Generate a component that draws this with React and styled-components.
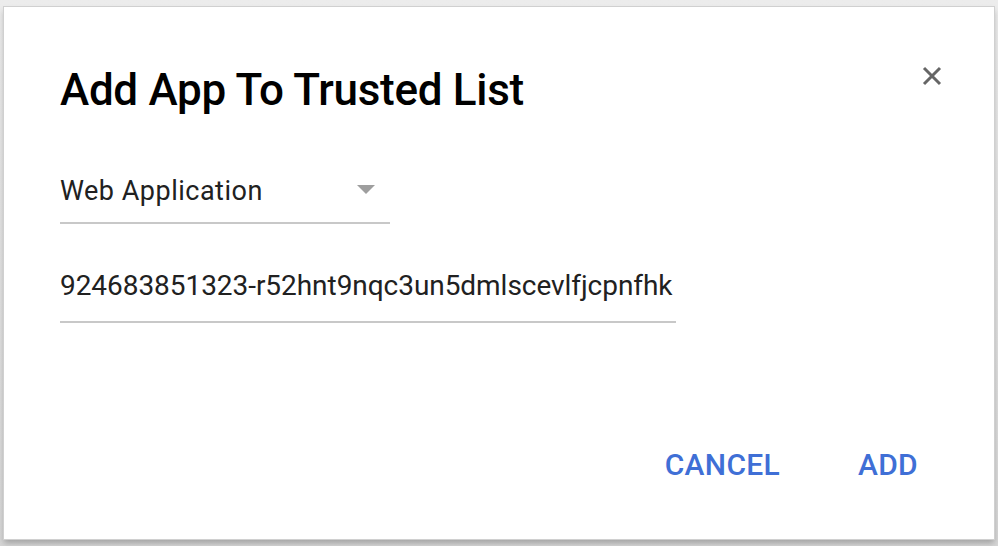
import React, { useState } from 'react';
import styled, { createGlobalStyle } from 'styled-components';

const GlobalStyle = createGlobalStyle`
  html, body {
    margin: 0;
    padding: 0;
    background: #e4e4e4;
    font-family: Roboto, "Liberation Sans", sans-serif;
  }
`;

const Backdrop = styled.div`
  width: 998px;
  height: 546px;
  padding: 7px 4px 0 4px;
  box-sizing: border-box;
  background: linear-gradient(#ececec, #d6d6d6);
`;

const Dialog = styled.div`
  width: 990px;
  height: 532px;
  box-sizing: border-box;
  background: #fff;
  box-shadow: 0 0 0 1px #d0d0d0, 0 4px 6px rgba(0, 0, 0, 0.25);
  padding: 57px 0 0 56px;
  display: flex;
  flex-direction: column;
`;

const Header = styled.div`
  display: flex;
  justify-content: space-between;
  align-items: flex-start;
  padding-right: 50px;
`;

const Title = styled.h2`
  margin: 0;
  font-size: 44px;
  font-weight: 500;
  line-height: 1.2;
  letter-spacing: -0.3px;
  color: #000;
`;

const CloseButton = styled.button`
  border: 0;
  background: none;
  padding: 0;
  width: 24px;
  height: 24px;
  cursor: pointer;
  display: flex;
  align-items: center;
  justify-content: center;
`;

const Field = styled.div`
  width: ${p => p.width}px;
  margin-top: ${p => p.top}px;
  border-bottom: 2px solid #c8c8c8;
  display: flex;
  align-items: center;
  justify-content: space-between;
  padding-bottom: ${p => p.bottom}px;
`;

const FieldText = styled.span`
  font-size: ${p => p.size}px;
  line-height: ${p => p.lh}px;
  letter-spacing: ${p => p.spacing || 0}px;
  color: #212121;
`;

const Caret = styled.span`
  width: 0;
  height: 0;
  border-left: 9px solid transparent;
  border-right: 9px solid transparent;
  border-top: 9px solid #9e9e9e;
  margin-right: 15px;
  margin-top: -3px;
`;

const Actions = styled.div`
  margin-top: auto;
  margin-bottom: 56px;
  display: flex;
  justify-content: flex-end;
  gap: 78px;
  padding-right: 76px;
`;

const TextButton = styled.button`
  border: 0;
  background: none;
  padding: 0;
  font-family: inherit;
  font-size: 30px;
  font-weight: 500;
  line-height: 1.2;
  letter-spacing: 0.3px;
  color: #3f6fd6;
  text-transform: uppercase;
  cursor: pointer;
`;

export default function App() {
  const [kind] = useState('Web Application');
  const [clientId] = useState('924683851323-r52hnt9nqc3un5dmlscevlfjcpnfhk');

  return (
    <>
      <GlobalStyle />
      <Backdrop>
        <Dialog>
          <Header>
            <Title>Add App To Trusted List</Title>
            <CloseButton aria-label="close">
              <svg width="22" height="22" viewBox="0 0 22 22">
                <path d="M3 3 L19 19 M19 3 L3 19" stroke="#666" strokeWidth="3" />
              </svg>
            </CloseButton>
          </Header>
          <Field width={330} top={59} bottom={16}>
            <FieldText size={27} lh={30} spacing={0.5}>{kind}</FieldText>
            <Caret />
          </Field>
          <Field width={616} top={46} bottom={19}>
            <FieldText size={28} lh={32} spacing={-0.05}>{clientId}</FieldText>
          </Field>
          <Actions>
            <TextButton>Cancel</TextButton>
            <TextButton>Add</TextButton>
          </Actions>
        </Dialog>
      </Backdrop>
    </>
  );
}
